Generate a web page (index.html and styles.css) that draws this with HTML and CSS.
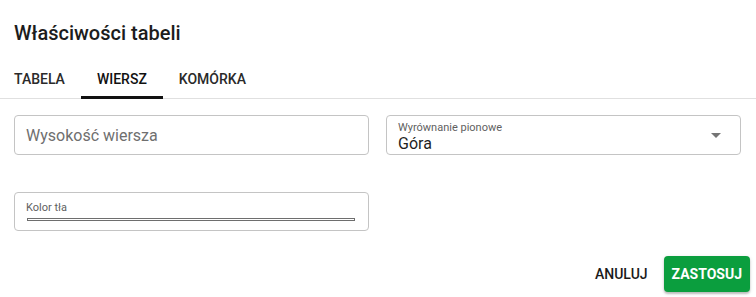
FILE: index.html
```html
<!DOCTYPE html>
<html lang="pl">
<head>
<meta charset="utf-8">
<title>Właściwości tabeli</title>
<link rel="stylesheet" href="styles.css">
</head>
<body>
<div class="dialog">
  <h2 class="title">Właściwości tabeli</h2>
  <div class="tabs">
    <div class="tab">Tabela</div>
    <div class="tab active">Wiersz</div>
    <div class="tab">Komórka</div>
  </div>
  <div class="content">
    <div class="field input-field">
      <span class="placeholder">Wysokość wiersza</span>
    </div>
    <div class="field select-field">
      <div class="select-text">
        <span class="small-label">Wyrównanie pionowe</span>
        <span class="value">Góra</span>
      </div>
      <svg class="arrow" width="10" height="5" viewBox="0 0 10 5"><path d="M0 0 L10 0 L5 5 Z" fill="#757575"/></svg>
    </div>
    <div class="field color-field">
      <span class="small-label">Kolor tła</span>
      <div class="color-swatch"></div>
    </div>
  </div>
  <div class="actions">
    <button class="btn btn-text">Anuluj</button>
    <button class="btn btn-primary">Zastosuj</button>
  </div>
</div>
</body>
</html>
```

FILE: styles.css
```css
* { box-sizing: border-box; }
html, body { margin: 0; padding: 0; background: #fff; }
body { font-family: Roboto, "Noto Sans", Arial, sans-serif; color: #212121; width: 756px; height: 297px; overflow: hidden; }

.title {
  margin: 0;
  padding: 21px 14px 0;
  font-size: 20px;
  line-height: 24px;
  font-weight: 500;
  color: #1c1c1c;
}

.tabs {
  display: flex;
  margin-top: 13px;
  padding-left: 0;
  border-bottom: 1px solid #e0e0e0;
}
.tab {
  position: relative;
  padding: 13px 16px 11px;
  font-size: 14px;
  line-height: 16px;
  font-weight: 500;
  text-transform: uppercase;
  color: #2a2a2a;
}
.tab:first-child { padding-left: 14px; }
.tab.active { color: #111; }
.tab.active::after {
  content: "";
  position: absolute;
  left: 0; right: 0; bottom: -1px;
  height: 3px;
  background: #111;
}

.content {
  display: grid;
  grid-template-columns: 1fr 1fr;
  column-gap: 17px;
  row-gap: 37px;
  padding: 16px 15px 0 14px;
}
.field {
  border: 1px solid #c4c4c4;
  border-radius: 4px;
  height: 40px;
}
.input-field {
  display: flex;
  align-items: center;
  padding: 0 11px;
}
.placeholder { font-size: 16px; color: #6f6f6f; }

.select-field {
  display: flex;
  align-items: center;
  justify-content: space-between;
  padding: 4px 19px 0 11px;
}
.select-text { display: flex; flex-direction: column; }
.small-label { font-size: 11px; line-height: 13px; color: #5f5f5f; }
.value { font-size: 16px; line-height: 19px; color: #1f1f1f; }
.arrow { display: block; margin-top: -4px; }

.color-field {
  height: 39px;
  padding: 3px 13px 0 11px;
}
.color-swatch {
  margin: 3px 0 0 1px;
  height: 3px;
  border: 1px solid #6e6e6e;
  background: #fff;
}

.actions {
  display: flex;
  justify-content: flex-end;
  align-items: center;
  gap: 8px;
  padding: 25px 6px 0 0;
}
.btn {
  font-family: inherit;
  font-size: 14px;
  font-weight: 500;
  text-transform: uppercase;
  border: none;
  border-radius: 4px;
  height: 36px;
  padding: 0 8px;
  cursor: pointer;
}
.btn-text { background: transparent; color: #1a1a1a; }
.btn-primary {
  background: #0b9e3e;
  color: #fff;
  font-weight: 700;
  box-shadow: 0 2px 2px rgba(0,0,0,0.2), 0 1px 4px rgba(0,0,0,0.12);
}
```
